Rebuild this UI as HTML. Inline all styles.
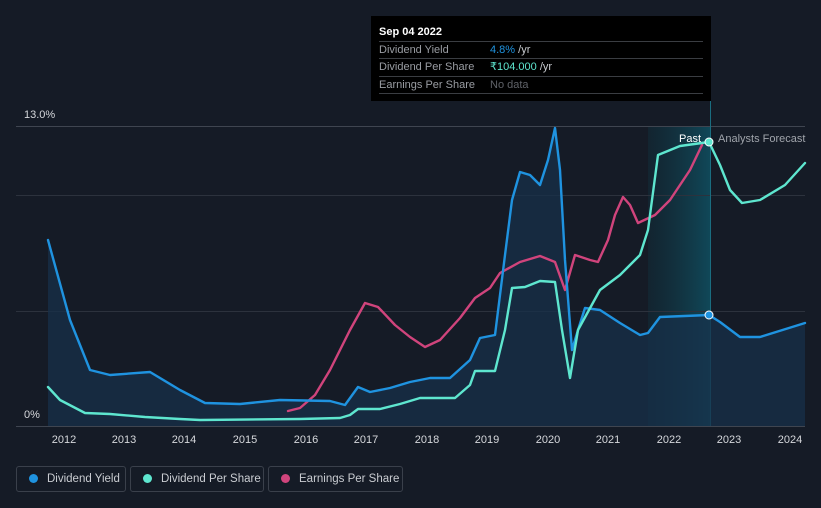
<!DOCTYPE html>
<html><head><meta charset="utf-8"><style>
html,body{margin:0;background:#151b26;width:821px;height:508px;overflow:hidden;font-family:"Liberation Sans",sans-serif;}
.lg{position:absolute;top:466px;height:26px;border:1px solid #3a404b;border-radius:3px;color:#c9ccd1;font-size:11.5px;line-height:24px;box-sizing:border-box;white-space:nowrap;overflow:hidden;}
.lg i{display:inline-block;width:9px;height:9px;border-radius:50%;margin:0 9px 0 12px;vertical-align:-1px;}
</style></head><body>
<svg width="821" height="508" style="position:absolute;left:0;top:0">
<defs>
<linearGradient id="fc" x1="0" x2="1"><stop offset="0" stop-color="#0e3a48" stop-opacity="0.3"/><stop offset="1" stop-color="#0f5365" stop-opacity="0.8"/></linearGradient>
</defs>
<rect x="648" y="127" width="62" height="299" fill="url(#fc)"/>
<g stroke="#2c323d" stroke-width="1">
<line x1="16" y1="126.5" x2="805" y2="126.5" stroke="#3f4550"/>
<line x1="16" y1="195.5" x2="805" y2="195.5"/>
<line x1="16" y1="311.5" x2="805" y2="311.5"/>
<line x1="16" y1="426.5" x2="805" y2="426.5" stroke="#3f4550"/>
</g>
<line x1="710.5" y1="100" x2="710.5" y2="426" stroke="#1a6d80"/>
<path d="M48,240 L70,320 L90,370 L110,375 L150,372 L180,390 L205,403 L240,404 L280,400 L330,401 L345,405 L358,387 L370,392 L390,388 L410,382 L430,378 L450,378 L470,360 L480,338 L495,335 L505,255 L512,200 L520,172 L530,175 L540,185 L548,160 L555,128 L560,170 L565,260 L572,350 L578,330 L585,308 L600,310 L620,323 L640,335 L648,333 L660,317 L709,315 L720,322 L740,337 L760,337 L805,323 L805,426 L48,426Z" fill="#17304a" fill-opacity="0.75"/>
<g fill="none" stroke-width="2.4" stroke-linejoin="round" stroke-linecap="round">
<path stroke="#d0447c" d="M288,411 L300,408 L315,395 L330,370 L350,330 L365,303 L378,307 L395,325 L410,337 L425,347 L440,340 L460,318 L475,298 L490,288 L500,273 L520,262 L540,256 L555,262 L565,290 L575,255 L590,260 L598,262 L608,240 L615,215 L623,197 L630,205 L638,223 L655,215 L670,200 L690,170 L702,145"/>
<path stroke="#1f93e0" d="M48,240 L70,320 L90,370 L110,375 L150,372 L180,390 L205,403 L240,404 L280,400 L330,401 L345,405 L358,387 L370,392 L390,388 L410,382 L430,378 L450,378 L470,360 L480,338 L495,335 L505,255 L512,200 L520,172 L530,175 L540,185 L548,160 L555,128 L560,170 L565,260 L572,350 L578,330 L585,308 L600,310 L620,323 L640,335 L648,333 L660,317 L709,315 L720,322 L740,337 L760,337 L805,323"/>
<path stroke="#5ee6cf" d="M48,387 L60,400 L85,413 L110,414 L145,417 L180,419 L200,420 L300,419 L340,418 L350,415 L358,409 L380,409 L400,404 L420,398 L455,398 L470,385 L475,371 L495,371 L505,330 L512,288 L525,287 L540,281 L555,282 L562,330 L570,378 L578,330 L600,290 L620,275 L640,255 L648,230 L658,155 L680,146 L709,142 L720,165 L730,190 L742,203 L760,200 L785,185 L805,163"/>
</g>
<circle cx="709" cy="142" r="4" fill="#5ee6cf" stroke="#fff" stroke-width="1"/>
<circle cx="709" cy="315" r="4" fill="#1f93e0" stroke="#fff" stroke-width="1"/>
<g font-size="11" fill="#d6d8dc">
<text x="24" y="118">13.0%</text>
<text x="24" y="418">0%</text>
<text x="679" y="142" fill="#fff">Past</text>
<text x="718" y="142" fill="#a0a4ab">Analysts Forecast</text>
</g>
<g font-size="11" fill="#d6d8dc" text-anchor="middle">
<text x="64" y="443">2012</text><text x="124" y="443">2013</text><text x="184" y="443">2014</text><text x="245" y="443">2015</text><text x="306" y="443">2016</text><text x="366" y="443">2017</text><text x="427" y="443">2018</text><text x="487" y="443">2019</text><text x="548" y="443">2020</text><text x="608" y="443">2021</text><text x="669" y="443">2022</text><text x="729" y="443">2023</text><text x="790" y="443">2024</text>
</g>
<rect x="371" y="16" width="340" height="85" fill="#000"/>
<g stroke="#3a3d42"><line x1="379" y1="41.5" x2="703" y2="41.5"/><line x1="379" y1="58.5" x2="703" y2="58.5"/><line x1="379" y1="76.5" x2="703" y2="76.5"/><line x1="379" y1="93.5" x2="703" y2="93.5"/></g>
<g font-size="11">
<text x="379" y="35" fill="#fff" font-weight="bold">Sep 04 2022</text>
<text x="379" y="53" fill="#9a9da3">Dividend Yield</text>
<text x="490" y="53" fill="#1f93e0">4.8%<tspan fill="#c9ccd1"> /yr</tspan></text>
<text x="379" y="70" fill="#9a9da3">Dividend Per Share</text>
<text x="490" y="70" fill="#5ee6cf">₹104.000<tspan fill="#c9ccd1"> /yr</tspan></text>
<text x="379" y="88" fill="#9a9da3">Earnings Per Share</text>
<text x="490" y="88" fill="#5f6268">No data</text>
</g>
</svg>
<div class="lg" style="left:16px;width:110px"><i style="background:#1f93e0"></i>Dividend Yield</div>
<div class="lg" style="left:130px;width:134px"><i style="background:#5ee6cf"></i>Dividend Per Share</div>
<div class="lg" style="left:268px;width:135px"><i style="background:#d0447c"></i>Earnings Per Share</div>
</body></html>
